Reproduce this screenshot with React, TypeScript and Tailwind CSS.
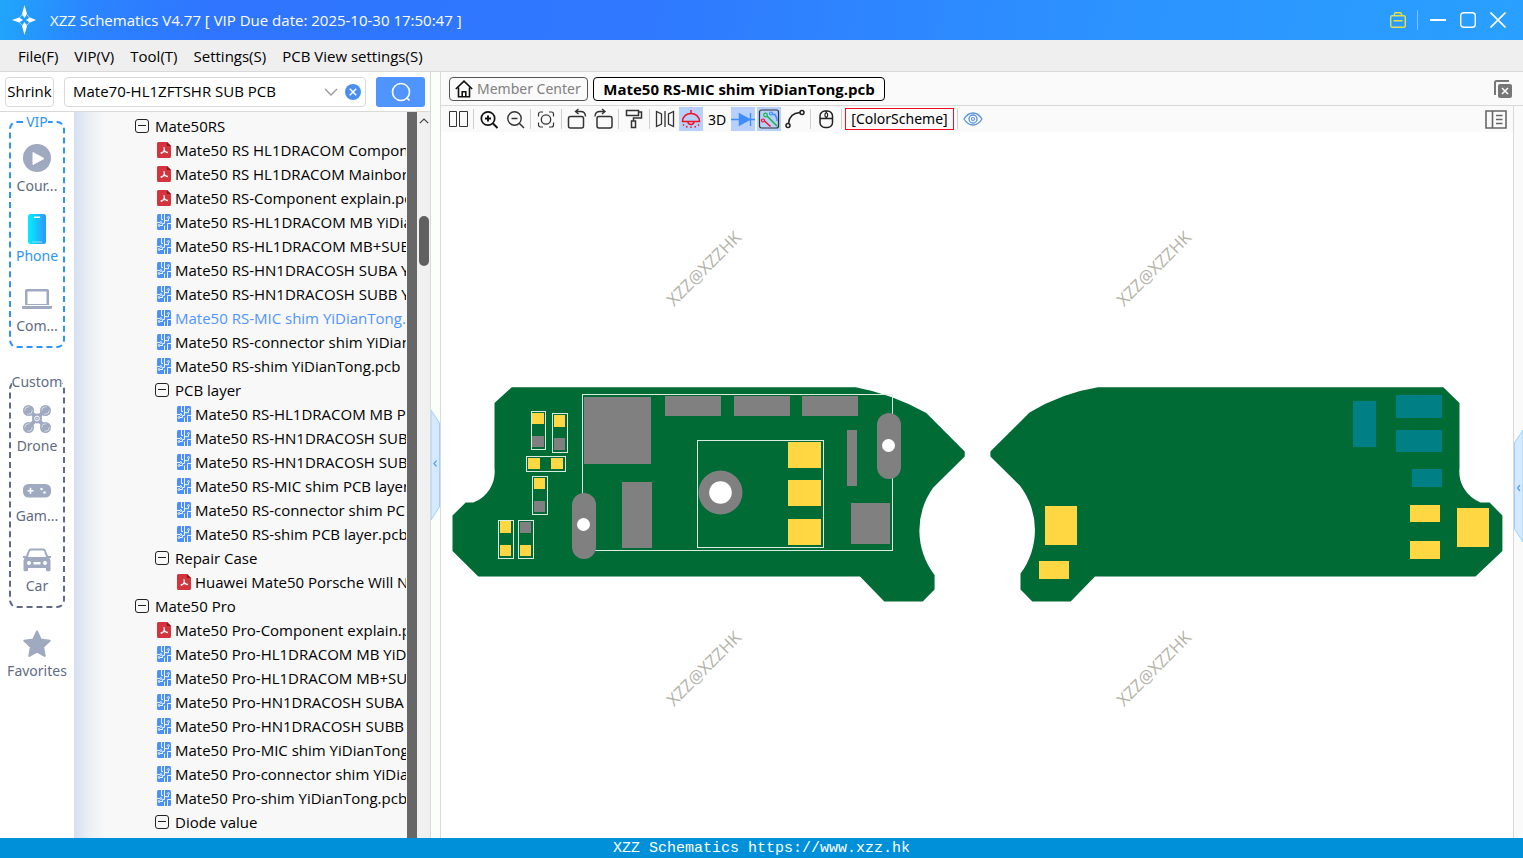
import { useState, type ReactNode } from "react";
import clsx from "clsx";

type FileKind = "pdf" | "pcb" | "folder";

interface TreeRow {
  kind: FileKind;
  level: 0 | 1 | 2;
  label: string;
}

const ROWS: TreeRow[] = [
  { kind: "folder", level: 0, label: "Mate50RS" },
  { kind: "pdf", level: 1, label: "Mate50 RS HL1DRACOM Component explain.pdf" },
  { kind: "pdf", level: 1, label: "Mate50 RS HL1DRACOM Mainbord.pdf" },
  { kind: "pdf", level: 1, label: "Mate50 RS-Component explain.pdf" },
  { kind: "pcb", level: 1, label: "Mate50 RS-HL1DRACOM MB YiDianTong.pcb" },
  { kind: "pcb", level: 1, label: "Mate50 RS-HL1DRACOM MB+SUB YiDianTong.pcb" },
  { kind: "pcb", level: 1, label: "Mate50 RS-HN1DRACOSH SUBA YiDianTong.pcb" },
  { kind: "pcb", level: 1, label: "Mate50 RS-HN1DRACOSH SUBB YiDianTong.pcb" },
  { kind: "pcb", level: 1, label: "Mate50 RS-MIC shim YiDianTong.pcb" },
  { kind: "pcb", level: 1, label: "Mate50 RS-connector shim YiDianTong.pcb" },
  { kind: "pcb", level: 1, label: "Mate50 RS-shim YiDianTong.pcb" },
  { kind: "folder", level: 1, label: "PCB layer" },
  { kind: "pcb", level: 2, label: "Mate50 RS-HL1DRACOM MB PCB layer.pcb" },
  { kind: "pcb", level: 2, label: "Mate50 RS-HN1DRACOSH SUBA PCB layer.pcb" },
  { kind: "pcb", level: 2, label: "Mate50 RS-HN1DRACOSH SUBB PCB layer.pcb" },
  { kind: "pcb", level: 2, label: "Mate50 RS-MIC shim PCB layer.pcb" },
  { kind: "pcb", level: 2, label: "Mate50 RS-connector shim PCB layer.pcb" },
  { kind: "pcb", level: 2, label: "Mate50 RS-shim PCB layer.pcb" },
  { kind: "folder", level: 1, label: "Repair Case" },
  { kind: "pdf", level: 2, label: "Huawei Mate50 Porsche Will Not Turn On.pdf" },
  { kind: "folder", level: 0, label: "Mate50 Pro" },
  { kind: "pdf", level: 1, label: "Mate50 Pro-Component explain.pdf" },
  { kind: "pcb", level: 1, label: "Mate50 Pro-HL1DRACOM MB YiDianTong.pcb" },
  { kind: "pcb", level: 1, label: "Mate50 Pro-HL1DRACOM MB+SUB YiDianTong.pcb" },
  { kind: "pcb", level: 1, label: "Mate50 Pro-HN1DRACOSH SUBA YiDianTong.pcb" },
  { kind: "pcb", level: 1, label: "Mate50 Pro-HN1DRACOSH SUBB YiDianTong.pcb" },
  { kind: "pcb", level: 1, label: "Mate50 Pro-MIC shim YiDianTong.pcb" },
  { kind: "pcb", level: 1, label: "Mate50 Pro-connector shim YiDianTong.pcb" },
  { kind: "pcb", level: 1, label: "Mate50 Pro-shim YiDianTong.pcb" },
  { kind: "folder", level: 1, label: "Diode value" },
];

const INDENT = ["pl-[61px]", "pl-[81px]", "pl-[101px]"];

/* ---------- file icons ---------- */

function PdfIcon() {
  return (
    <svg width="14" height="16" viewBox="0 0 14 16" className="shrink-0">
      <path d="M1.500 0H10l4 4v10.500a1.500 1.500 0 0 1-1.500 1.500h-11A1.500 1.500 0 0 1 0 14.500v-13A1.500 1.500 0 0 1 1.500 0z" fill="#d3343d" />
      <path d="M10 0v4h4z" fill="#8f1420" />
      <path d="M7 5.500c.8 2-.5 4.500-2.500 6M4 11c2-1.300 4.500-1.500 6.500-.8M7 7.500c.5 1.300 1.500 2.500 3 3.200" fill="none" stroke="#fff" strokeWidth="1.100" strokeLinecap="round" />
    </svg>
  );
}

function PcbIcon() {
  return (
    <svg width="14" height="16" viewBox="0 0 14 16" className="shrink-0">
      <rect width="14" height="16" rx="1.500" fill="#4b8ffa" />
      <g fill="none" stroke="#fff" strokeWidth=".9">
        <path d="M4.500 0v5.500H6M7.500 0v9.500H5.500v2H2.800M11.500 4.500v2.200H8M14 9.500h-3.500V16M0 8.500h3M7.500 16v-4.500" />
        <circle cx="11.500" cy="3.500" r=".9" />
        <circle cx="3.800" cy="8.500" r=".9" />
        <circle cx="2" cy="11.500" r=".9" />
      </g>
    </svg>
  );
}

function ToggleIcon() {
  return (
    <svg width="14" height="14" viewBox="0 0 14 14" fill="none" stroke="#222" className="shrink-0">
      <rect x=".5" y=".5" width="13" height="13" rx="2.500" />
      <path d="M3 6.500h8" />
    </svg>
  );
}

/* ---------- title bar ---------- */

function TitleBar() {
  return (
    <header className="flex h-10 shrink-0 items-center bg-[linear-gradient(100deg,#20a6fb_0%,#2b84ff_6%,#2f75ff_14%,#2f78ff_42%,#2c92ff_72%,#29a0ff_100%)] pr-[17px] pl-3 text-white">
      <svg width="24" height="30" viewBox="0 0 24 30" className="shrink-0">
        <g fill="none" stroke="#a8d8ff" strokeWidth="1">
          <circle cx="12.500" cy="15" r="5.500" strokeDasharray="5 3.600" strokeDashoffset="-2" />
        </g>
        <path d="M12.500 0l2.500 9-2.500 4-2.500-4zM12.500 30l2.500-9-2.500-4-2.500 4zM0 15l7-2.500 4 2.500-4 2.500zM24 15l-6-2.500-4 2.500 4 2.500z" fill="#fff" />
      </svg>
      <h1 className="ml-3.5 flex-1">XZZ Schematics V4.77 [ VIP Due date: 2025-10-30 17:50:47 ]</h1>
      <div className="flex items-center">
        <button aria-label="Toolbox">
          <svg width="16" height="16" viewBox="0 0 16 16" fill="none" stroke="#e3e04a" strokeWidth="1.400">
            <rect x=".7" y="3.700" width="14.600" height="11.600" rx="1.500" />
            <path d="M4.500 3.500V2A1.200 1.200 0 0 1 5.700.8h4.600A1.200 1.200 0 0 1 11.500 2v1.500M3.500 8.700h9" />
          </svg>
        </button>
        <span className="mr-3 ml-[11px] h-5 w-px bg-white/40" />
        <div className="flex gap-3.5">
          <button aria-label="Minimize">
            <svg width="16" height="16" viewBox="0 0 16 16" stroke="#fff" strokeWidth="2">
              <path d="M0 8h16" />
            </svg>
          </button>
          <button aria-label="Maximize">
            <svg width="16" height="16" viewBox="0 0 16 16" fill="none" stroke="#fff" strokeWidth="1.400">
              <rect x=".7" y=".7" width="14.600" height="14.600" rx="3" />
            </svg>
          </button>
          <button aria-label="Close">
            <svg width="16" height="16" viewBox="0 0 16 16" stroke="#fff" strokeWidth="1.600">
              <path d="M.5.500l15 15M15.500.500l-15 15" />
            </svg>
          </button>
        </div>
      </div>
    </header>
  );
}

function MenuBar() {
  return (
    <nav className="flex h-8 shrink-0 items-center gap-4 border-b border-[#d9d9d9] bg-[#efefef] px-[18px] pt-0.5">
      {["File(F)", "VIP(V)", "Tool(T)", "Settings(S)", "PCB View settings(S)"].map((m) => (
        <button key={m}>{m}</button>
      ))}
    </nav>
  );
}

/* ---------- left panel ---------- */

function SearchRow() {
  const [query, setQuery] = useState("Mate70-HL1ZFTSHR SUB PCB");
  return (
    <div className="flex h-10 shrink-0 items-center border-b border-[#d9d9d9] bg-white px-[5px]">
      <button className="h-[30px] w-[49px] rounded border border-[#d9d9d9]">Shrink</button>
      <div className="ml-2.5 flex h-[30px] min-w-0 flex-1 items-center rounded border border-[#d9d9d9] pr-1 pl-2">
        <input
          aria-label="Search"
          className="min-w-0 flex-1 outline-none"
          value={query}
          onChange={(e) => setQuery(e.target.value)}
        />
        <button aria-label="History">
          <svg width="14" height="8" viewBox="0 0 14 8" fill="none" stroke="#9a9a9a" strokeWidth="1.400">
            <path d="M1 1l6 6 6-6" />
          </svg>
        </button>
        <button aria-label="Clear" className="ml-[7px]" onClick={() => setQuery("")}>
          <svg width="16" height="16" viewBox="0 0 16 16">
            <circle cx="8" cy="8" r="8" fill="#4a8fee" />
            <path d="M4.800 4.800l6.400 6.400M11.200 4.800l-6.400 6.400" stroke="#fff" strokeWidth="1.500" />
          </svg>
        </button>
      </div>
      <button aria-label="Run search" className="ml-2.5 flex h-[30px] w-[49px] items-center justify-center rounded-[3px] bg-[#4f94ff]">
        <svg width="20" height="20" viewBox="0 0 20 20" fill="none" stroke="#fff" strokeWidth="1.600">
          <circle cx="10" cy="10" r="8.500" />
          <path d="M15.500 15.500l3 3" />
        </svg>
      </button>
    </div>
  );
}

function SideItem({ label, active, children }: { label: string; active?: boolean; children: ReactNode }) {
  return (
    <button className={clsx("flex flex-col items-center gap-1", active ? "text-[#2f95f5]" : "text-[#5f6b82]")}>
      <svg width="30" height="28" viewBox="0 0 30 28" fill="#9fa9bf" className="overflow-visible">
        {children}
      </svg>
      <span className="leading-5">{label}</span>
    </button>
  );
}

function Sidebar() {
  return (
    <aside className="flex w-[74px] shrink-0 flex-col items-center bg-white font-['Noto_Sans','Open_Sans',sans-serif] text-[14px]">
      <fieldset className="flex w-14 flex-col items-center gap-[18px] rounded-lg border-2 border-dashed border-[#2f95f5] pt-3 pb-2.5">
        <legend className="mx-auto leading-5 text-[#2f95f5]">VIP</legend>
        <SideItem label="Cour...">
          <circle cx="15" cy="14" r="14" />
          <path d="M11 8.500v12l11-6z" fill="#fff" stroke="#fff" strokeLinejoin="round" />
        </SideItem>
        <SideItem label="Phone" active>
          <defs>
            <linearGradient id="phone">
              <stop offset="0" stopColor="#00f0ff" />
              <stop offset="1" stopColor="#2f95ff" />
            </linearGradient>
          </defs>
          <rect x="6" y="0" width="18" height="30" rx="2.500" fill="url(#phone)" />
          <path d="M12.500 3.200h5" stroke="#fff" strokeWidth="1.500" strokeLinecap="round" />
          <path d="M10 28h10" stroke="#bfe8ff" strokeWidth=".8" />
        </SideItem>
        <SideItem label="Com...">
          <path fillRule="evenodd" d="M4.500 5h21A1.500 1.500 0 0 1 27 6.500V21H3V6.500A1.500 1.500 0 0 1 4.500 5zM5.500 7.500V20h19V7.500z" />
          <path d="M0 22h30v1.500a1.500 1.500 0 0 1-1.500 1.500h-27A1.500 1.500 0 0 1 0 23.500z" />
        </SideItem>
      </fieldset>
      <fieldset className="mt-6 flex w-14 flex-col items-center gap-[18px] rounded-lg border-2 border-dashed border-[#5f6b82] pt-3 pb-2.5">
        <legend className="mx-auto leading-5 text-[#5f6b82]">Custom</legend>
        <SideItem label="Drone">
          <path d="M6.500 5.500l17 18M23.500 5.500l-17 18" stroke="#9fa9bf" strokeWidth="4" />
          <circle cx="15" cy="14.500" r="5" />
          {[
            [6.5, 6.5],
            [23.5, 6.5],
            [6.5, 23.5],
            [23.5, 23.5],
          ].map(([x, y]) => (
            <g key={`${x}-${y}`}>
              <circle cx={x} cy={y} r="5.500" />
              <circle cx={x} cy={y} r="3.700" fill="none" stroke="#dfe3ec" strokeWidth=".8" strokeDasharray="7 4" />
            </g>
          ))}
          <circle cx="15" cy="14.500" r="2.400" fill="none" stroke="#fff" />
          <circle cx="15" cy="14.500" r=".7" fill="#fff" />
        </SideItem>
        <SideItem label="Gam...">
          <rect x="1" y="10" width="28" height="13.500" rx="5.500" />
          <path d="M5.500 16.700h6M8.500 13.700v6" stroke="#fff" strokeWidth="1.600" />
          <circle cx="19.500" cy="15" r="1.200" fill="#fff" />
          <circle cx="22.500" cy="18.500" r="1.200" fill="#fff" />
        </SideItem>
        <SideItem label="Car">
          <path
            fillRule="evenodd"
            transform="translate(0 2)"
            d="M9 2.500h12a3 3 0 0 1 2.800 2L26 10h3v2h-1.500l1 2.500V24a1.200 1.200 0 0 1-1.200 1.200h-2.100A1.200 1.200 0 0 1 24 24v-2H6v2a1.200 1.200 0 0 1-1.200 1.200H2.700A1.200 1.200 0 0 1 1.500 24v-9.500l1-2.500H1v-2h3l2.200-5.500a3 3 0 0 1 2.800-2zM9 4.500a1.500 1.500 0 0 0-1.300 1L6 11h18l-1.700-5.500a1.500 1.500 0 0 0-1.300-1zM7 15a2 2 0 1 0 0 4 2 2 0 0 0 0-4zM23 15a2 2 0 1 0 0 4 2 2 0 0 0 0-4zM11.500 16v2.500h7V16z"
          />
        </SideItem>
      </fieldset>
      <div className="mt-[21px]">
        <SideItem label="Favorites">
          <path
            d="M15 2.500l3.700 8 9 1.200-6.600 6.200 1.600 9L15 22.700l-7.700 4.200 1.600-9-6.600-6.200 9-1.200z"
            stroke="#9fa9bf"
            strokeWidth="2"
            strokeLinejoin="round"
          />
        </SideItem>
      </div>
    </aside>
  );
}

function FileTree() {
  const [selected, setSelected] = useState(8);
  return (
    <div className="min-w-0 flex-1 bg-[#f8f8f8] bg-[linear-gradient(90deg,#d5dff0_0,#eaeef4_14px,#f8f8f8_32px)] pt-0.5 pr-px">
      <ul className="h-full overflow-hidden">
        {ROWS.map((row, i) => (
          <li key={i}>
            <button
              onClick={() => setSelected(i)}
              className={clsx(
                "flex h-6 w-full items-center whitespace-nowrap",
                INDENT[row.level],
                i === selected && "text-[#4f94ff]",
              )}
            >
              <span className={clsx("flex w-5 shrink-0", row.kind !== "folder" && "pl-0.5")}>
                {row.kind === "folder" && <ToggleIcon />}
                {row.kind === "pdf" && <PdfIcon />}
                {row.kind === "pcb" && <PcbIcon />}
              </span>
              {row.label}
            </button>
          </li>
        ))}
      </ul>
    </div>
  );
}

function LeftPanel() {
  return (
    <section className="flex w-[431px] shrink-0 flex-col border-r border-[#d9d9d9]">
      <SearchRow />
      <div className="flex min-h-0 flex-1">
        <Sidebar />
        <FileTree />
        <div className="w-2.5 bg-[#676767]" />
        {/* scrollbar */}
        <div className="flex w-[13px] flex-col items-center bg-[#f0f0f0]">
          <svg width="10" height="6" viewBox="0 0 10 6" fill="none" stroke="#444" strokeWidth="1.200" className="mt-1.5">
            <path d="M.8 5.200L5 1l4.200 4.200" />
          </svg>
          <div className="mt-[92px] h-[50px] w-2.5 rounded-full bg-[#606060]" />
        </div>
      </div>
    </section>
  );
}

/* ---------- toolbar ---------- */

function Tool({ label, on, children }: { label: string; on?: boolean; children: ReactNode }) {
  return (
    <button
      aria-label={label}
      className={clsx("flex size-6 shrink-0 items-center justify-center whitespace-nowrap", on && "bg-[#b7d0fc]")}
    >
      {children}
    </button>
  );
}

function Glyph({ children, color = "#333" }: { children: ReactNode; color?: string }) {
  return (
    <svg width="24" height="24" viewBox="0 0 24 24" fill="none" stroke={color} strokeWidth="1.500" className="shrink-0">
      {children}
    </svg>
  );
}

function Sep() {
  return <span className="mx-px h-5 w-px shrink-0 bg-[#cfcfcf]" />;
}

function Toolbar() {
  return (
    <div className="flex h-[26px] shrink-0 items-center gap-0.5 bg-[#fafafa] pr-1.5 pl-[5px] font-['Noto_Sans','Open_Sans',sans-serif] text-[14px]">
      <Tool label="Split view">
        <Glyph>
          <path d="M3.500 4.500h7v15h-7zM13.500 4.500h8v15h-8z" strokeWidth="1" />
        </Glyph>
      </Tool>
      <Sep />
      <Tool label="Zoom in">
        <Glyph color="#111">
          <circle cx="11" cy="11.500" r="6.700" strokeWidth="1.700" />
          <path d="M16 16.500l4.500 4.500M8 11.500h6M11 8.500v6" strokeWidth="1.900" />
        </Glyph>
      </Tool>
      <Tool label="Zoom out">
        <Glyph>
          <circle cx="11.500" cy="11.500" r="6.700" strokeWidth="1.400" />
          <path d="M16.500 16.500l4.500 4.500M8.500 11.500h6" />
        </Glyph>
      </Tool>
      <Sep />
      <Tool label="Fit">
        <Glyph>
          <circle cx="12" cy="12.500" r="4.700" strokeWidth="1.300" />
          <path d="M4.500 9.500V7a2 2 0 0 1 2-2H9M15 5h2.500a2 2 0 0 1 2 2v2.500M19.500 15.500V18a2 2 0 0 1-2 2H15M9 20H6.500a2 2 0 0 1-2-2v-2.500" strokeWidth="1.200" />
        </Glyph>
      </Tool>
      <Sep />
      <Tool label="Rotate left">
        <Glyph>
          <rect x="3.500" y="9.500" width="15" height="11.500" rx="2" />
          <path d="M20.500 9.500c0-3-2-5-5-5h-5M13.500 2l-3 2.500 3 2.500" strokeWidth="1.400" />
        </Glyph>
      </Tool>
      <Tool label="Rotate right">
        <Glyph>
          <rect x="6" y="9.500" width="15" height="11.500" rx="2" />
          <path d="M4 9.500c0-3 2-5 5-5h5M11 2l3 2.500L11 7" strokeWidth="1.400" />
        </Glyph>
      </Tool>
      <Sep />
      <Tool label="Paint">
        <Glyph>
          <path d="M4.500 3.500h12v5h-12zM16.500 5h3v6h-8v3M9.500 14h4v6.500h-4z" />
        </Glyph>
      </Tool>
      <Sep />
      <Tool label="Mirror">
        <Glyph>
          <path d="M3.500 4.500v15l5-2.500V7zM20.500 4.500v15l-5-2.500V7zM12 4v16" strokeWidth="1.300" />
        </Glyph>
      </Tool>
      <Tool label="Lamp" on>
        <Glyph color="#f01020">
          <path d="M12 3v3M3.500 14.500c0-5 4-8 8.500-8s8.500 3 8.500 8zM9 14.500a3 3 0 0 0 6 0M5 17.500l-1 1M8 19l-.5 1.500M12 19.500V21M16 19l.5 1.500M19 17.500l1 1" />
        </Glyph>
      </Tool>
      <Tool label="3D">3D</Tool>
      <Tool label="Diode" on>
        <Glyph color="#3f8cff">
          <path d="M0 12.500h24M19.500 6v13" strokeWidth="1.300" />
          <path d="M8.500 7v11l10-5.500z" fill="#3f8cff" />
        </Glyph>
      </Tool>
      <Tool label="Nets" on>
        <Glyph>
          <rect x="2.500" y="3" width="19" height="18" rx="2" strokeWidth="1.200" />
          <path d="M10 9l10 10" stroke="#14b83c" />
          <circle cx="8.500" cy="8" r="1.800" stroke="#14b83c" strokeWidth="1.200" />
          <circle cx="6" cy="13.500" r="1.500" stroke="#f01020" strokeWidth="1.200" />
          <path d="M7.500 14l6 5.500" stroke="#f01020" />
          <circle cx="14" cy="6.500" r="1.500" stroke="#3f8cff" strokeWidth="1.200" />
          <path d="M15.500 7.500h2.500l2 4.500v2" stroke="#3f8cff" />
        </Glyph>
      </Tool>
      <Tool label="Curve">
        <Glyph color="#222">
          <circle cx="5" cy="18.500" r="2" />
          <circle cx="19" cy="5.500" r="2" />
          <path d="M5.500 16.500C6 10 10 6 17 5.500" />
        </Glyph>
      </Tool>
      <Sep />
      <Tool label="Mouse">
        <Glyph color="#222">
          <rect x="6" y="4" width="12.500" height="16.500" rx="5" />
          <path d="M6 11.500h12.500M12.300 4v2M12.300 10v1.500" />
          <rect x="11" y="6" width="2.600" height="4" rx="1.300" strokeWidth="1.200" />
        </Glyph>
      </Tool>
      <Sep />
      <button className="h-[22px] w-[109px] shrink-0 border border-[#f01020] leading-5 whitespace-nowrap">[ColorScheme]</button>
      <Sep />
      <Tool label="Visibility">
        <Glyph color="#5a93dd">
          <path d="M3 12c2.500-4 5.500-6 9-6s6.500 2 9 6c-2.500 4-5.500 6-9 6s-6.500-2-9-6z" strokeWidth="1.300" />
          <circle cx="12" cy="12" r="4" strokeWidth="1.300" />
          <circle cx="12" cy="12" r="1.500" strokeWidth="1.200" />
        </Glyph>
      </Tool>
      <button aria-label="Side panel" className="ml-auto">
        <svg width="22" height="19" viewBox="0 0 22 19" fill="none" stroke="#666" strokeWidth="1.600">
          <path d="M1 1h20v17H1zM7.500 1v17M11 5.500h6.500M11 9.500h6.500M11 13.500h6.500" />
        </svg>
      </button>
    </div>
  );
}

function TabBar() {
  return (
    <div className="flex h-[34px] shrink-0 items-center gap-[5px] border-b border-[#d9d9d9] bg-[#fafafa] pr-[11px] pl-2">
      <button className="flex h-6 w-[139px] items-center gap-1 rounded border border-[#555] pl-[5px] font-['Noto_Sans','Open_Sans',sans-serif] text-[14px] whitespace-nowrap text-[#808080]">
        <svg width="18" height="18" viewBox="0 0 18 18" fill="none" stroke="#111" strokeWidth="1.600" className="shrink-0">
          <path d="M.8 9L9 1.200 17.200 9M3.500 7.500v9.300h11V7.500" />
          <path d="M7.200 16.500v-4.700h3.600v4.700" />
        </svg>
        Member Center
      </button>
      <button className="h-6 w-[292px] rounded border border-black bg-white leading-[22px] font-bold whitespace-nowrap">
        Mate50 RS-MIC shim YiDianTong.pcb
      </button>
      <button aria-label="Close all tabs" className="ml-auto">
        <svg width="18" height="18" viewBox="0 0 18 18" fill="none">
          <path d="M1 15V2.500A1.500 1.500 0 0 1 2.500 1H15" stroke="#777" strokeWidth="2" />
          <rect x="4" y="4" width="14" height="14" rx="2" fill="#777" />
          <path d="M8 8l6 6M14 8l-6 6" stroke="#fff" strokeWidth="1.500" />
        </svg>
      </button>
    </div>
  );
}

/* ---------- board ---------- */

type Box = [x: number, y: number, w: number, h: number];

const FRAMES: Box[] = [
  [582.5, 394.5, 310, 156],
  [697.5, 440.5, 126, 107],
  [531.5, 411.5, 14, 38],
  [552.5, 413.5, 15, 39],
  [526.5, 456.5, 39, 15],
  [532.5, 476.5, 15, 38],
  [498.5, 520.5, 15, 38],
  [518.5, 520.5, 15, 38],
];

const GREY_PADS: Box[] = [
  [584, 397, 67, 67],
  [665, 396, 56, 20],
  [734, 396, 56, 20],
  [802, 396, 56, 20],
  [622, 482, 30, 66],
  [847, 430, 10, 56],
  [851, 503, 39, 41],
  [532, 436, 12, 11],
  [554, 438, 11, 12],
  [534, 501, 11, 11],
  [520, 522, 11, 11],
];

const GOLD_PADS: Box[] = [
  [788, 442, 33, 26],
  [788, 480, 33, 26],
  [788, 519, 33, 26],
  [532, 413, 12, 11],
  [554, 415, 11, 12],
  [528, 458, 12, 11],
  [551, 458, 12, 11],
  [534, 478, 11, 11],
  [500, 521, 11, 12],
  [500, 545, 11, 11],
  [520, 545, 11, 11],
  [1045, 506, 32, 39],
  [1039, 561, 30, 18],
  [1410, 505, 30, 17],
  [1410, 541, 30, 18],
  [1457, 508, 32, 39],
];

const TEAL_PADS: Box[] = [
  [1353, 401, 23, 46],
  [1396, 395, 46, 23],
  [1396, 430, 46, 22],
  [1412, 469, 30, 18],
];

const WATERMARKS = [
  [674, 307],
  [1124, 307],
  [674, 707],
  [1124, 707],
];

function Pads({ boxes, fill }: { boxes: Box[]; fill: string }) {
  return (
    <g fill={fill}>
      {boxes.map(([x, y, w, h]) => (
        <rect key={`${x}-${y}`} x={x} y={y} width={w} height={h} />
      ))}
    </g>
  );
}

function Board() {
  return (
    <svg viewBox="441 132 1072 706" className="min-h-0 w-full flex-1 bg-white">
      <g fill="#006b35">
        <path d="M511.700 387.300L494.500 403V468A33 33 0 0 1 473.300 502.500H465.700L452.500 515.500V551L478.300 576.500H860L884.300 601.500H922.700L934.600 589.500V575A73 73 0 0 1 933.300 487.500L964.700 456.500V451.500L926.300 413Q892 394 855.700 387.300z" />
        <path d="M1098 387.300H1443.300L1459.500 403V468A33 33 0 0 0 1480.600 502.500H1489.600L1502.400 515.500V551L1475.500 576.500H1095L1070.700 601.500H1032.300L1020.500 589.500V573.600A73 73 0 0 0 1019.800 485.500L990.400 456.500V451.500L1029.500 412.500Q1062 393 1098 387.300z" />
      </g>
      <g fill="none" stroke="#dcebe2">
        {FRAMES.map(([x, y, w, h]) => (
          <rect key={`${x}-${y}`} x={x} y={y} width={w} height={h} />
        ))}
      </g>
      <Pads boxes={GREY_PADS} fill="#808080" />
      <Pads boxes={GOLD_PADS} fill="#ffd743" />
      <Pads boxes={TEAL_PADS} fill="#008084" />
      <g fill="#808080">
        <rect x="572" y="493" width="24" height="66" rx="12" />
        <rect x="877" y="413" width="24" height="66" rx="12" />
        <circle cx="720.500" cy="492.500" r="22" />
      </g>
      <g fill="#fff">
        <circle cx="583.500" cy="524.500" r="6.500" />
        <circle cx="888.500" cy="445.500" r="6.500" />
        <circle cx="720.500" cy="492.500" r="11.300" />
      </g>
      <g fill="#b3b3a8" fontSize="17">
        {WATERMARKS.map(([x, y]) => (
          <text key={`${x}-${y}`} transform={`translate(${x} ${y}) rotate(-45)`}>
            XZZ@XZZHK
          </text>
        ))}
      </g>
    </svg>
  );
}

/* ---------- app ---------- */

export default function App() {
  return (
    <div className="flex h-screen flex-col overflow-hidden bg-white font-['Open_Sans','Noto_Sans',sans-serif] text-[15px] text-black">
      <TitleBar />
      <MenuBar />
      <main className="flex min-h-0 flex-1">
        <LeftPanel />
        <div className="flex w-2.5 shrink-0 items-center border-r border-[#d9d9d9] bg-[#fafff9] pt-5">
          <button aria-label="Collapse file list">
            <svg width="9" height="110" viewBox="0 0 9 110">
              <path d="M0 0l8.500 13v84L0 110z" fill="#d6eaff" stroke="#9fd0fb" />
              <path d="M5.500 50.500L3 53.500l2.500 3" fill="none" stroke="#4da3f0" strokeWidth="1.200" />
            </svg>
          </button>
        </div>
        <section className="flex min-w-0 flex-1 flex-col">
          <TabBar />
          <div className="flex min-h-0 flex-1">
            <div className="flex min-w-0 flex-1 flex-col">
              <Toolbar />
              <Board />
            </div>
            <div className="flex w-2.5 shrink-0 items-center border-l border-[#d9d9d9] bg-[#fafafa] pt-7">
              <button aria-label="Open side panel">
                <svg width="9" height="112" viewBox="0 0 9 112">
                  <path d="M9 0L.5 13v86L9 112z" fill="#d6eaff" stroke="#9fd0fb" />
                  <path d="M6 55l-2.500 3L6 61" fill="none" stroke="#4da3f0" strokeWidth="1.200" />
                </svg>
              </button>
            </div>
          </div>
        </section>
      </main>
      <footer className="h-5 shrink-0 bg-[#0090d9] text-center font-['Liberation_Mono',monospace] text-[15px] leading-[22px] text-white">
        XZZ Schematics https://www.xzz.hk
      </footer>
    </div>
  );
}
